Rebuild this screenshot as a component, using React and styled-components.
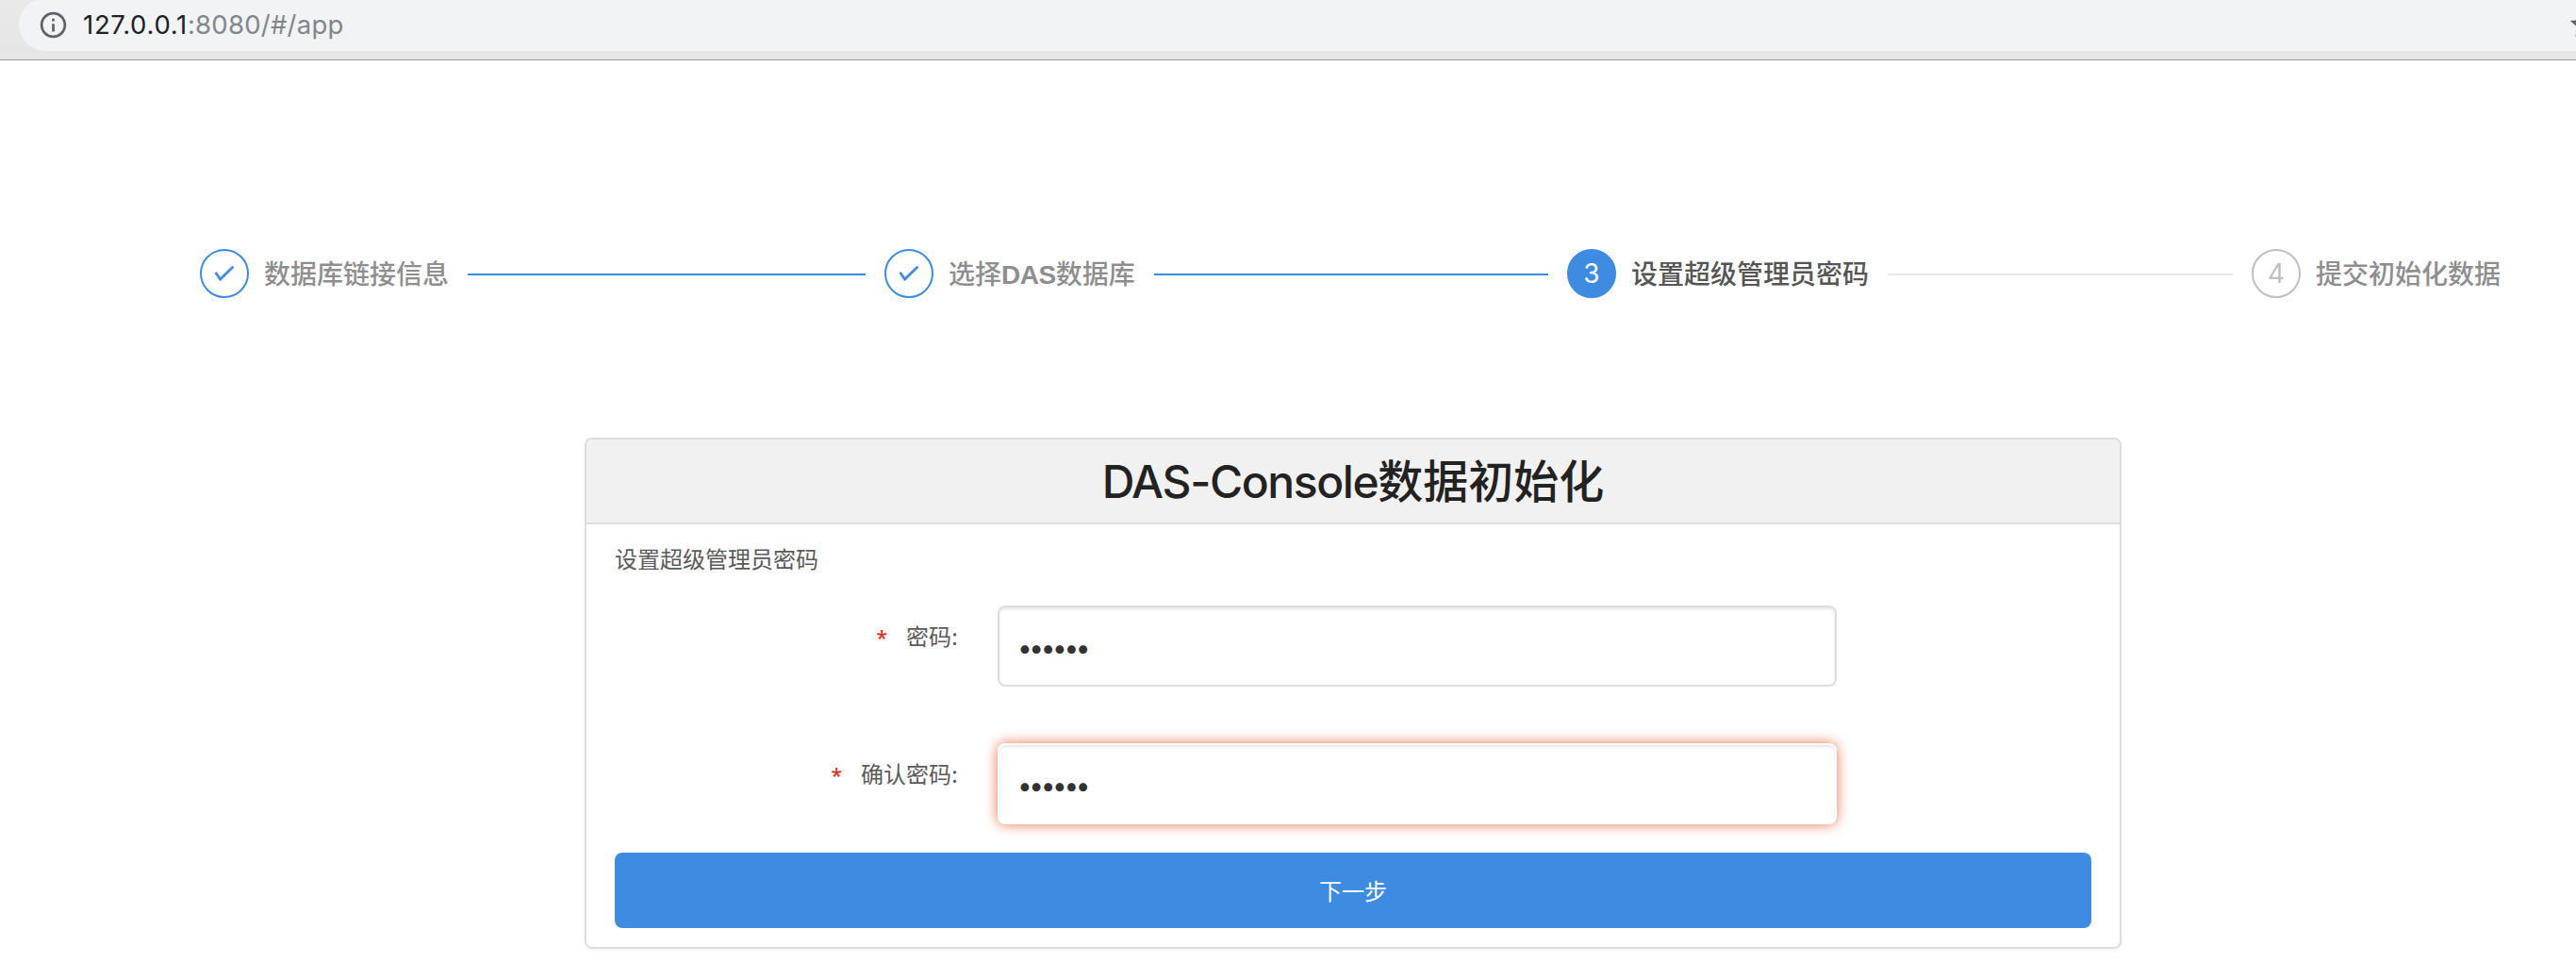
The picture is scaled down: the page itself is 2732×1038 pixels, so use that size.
import React from "react";
import styled, { createGlobalStyle, css } from "styled-components";

const BLUE = "#3d8ce2";

const GlobalStyle = createGlobalStyle`
  * { box-sizing: border-box; }
  html, body { margin: 0; padding: 0; background: #fff; }
  body {
    overflow: hidden;
    font-family: Inter, "Noto Sans CJK SC", sans-serif;
  }
`;

const Page = styled.div`
  display: flex;
  flex-direction: column;
  height: 1038px;
  overflow: hidden;
`;

const BrowserBar = styled.header`
  flex: none;
  height: 64px;
  padding-left: 20px;
  background: linear-gradient(#e9e9e9, #e6e6e6);
  border-bottom: 1px solid #989898;
  overflow: hidden;
`;

const AddressField = styled.div`
  display: flex;
  align-items: center;
  height: 56px;
  margin-top: -2px;
  padding-left: 20px;
  border-radius: 28px 0 0 28px;
  background: #f1f3f5;
`;

const InfoIcon = styled.svg`
  flex: none;
  width: 33px;
  height: 33px;
`;

const Url = styled.span`
  flex: 1;
  margin-left: 15px;
  font-size: 27.5px;
  line-height: 40px;
  letter-spacing: 0.25px;
  color: #80868b;
  white-space: nowrap;
`;

const Host = styled.span`
  color: #202124;
  letter-spacing: 0.7px;
`;

const StarIcon = styled.svg`
  flex: none;
  width: 34px;
  height: 34px;
  margin-right: -25px;
`;

const Steps = styled.ol`
  display: flex;
  flex: none;
  list-style: none;
  margin: 200px 80px 0 212px;
  padding: 0;
`;

const Step = styled.li`
  display: flex;
  align-items: center;
  flex: none;
  width: ${(p) => p.$width}px;
  height: 52px;
`;

const badgeStates = {
  done: css`
    border-color: ${BLUE};
    color: ${BLUE};
  `,
  current: css`
    border-color: ${BLUE};
    background: ${BLUE};
    color: #fff;
  `,
  waiting: css`
    border-color: #bfbfbf;
    color: #bfbfbf;
  `,
};

const Badge = styled.span`
  display: flex;
  align-items: center;
  justify-content: center;
  flex: none;
  width: 52px;
  height: 52px;
  border: 2px solid;
  border-radius: 50%;
  font-size: 28px;
  line-height: 48px;
  ${(p) => badgeStates[p.$state]}
`;

const StepTitle = styled.span`
  flex: none;
  margin-left: 16px;
  padding-top: 3px;
  font-family: "Liberation Sans", "Noto Sans CJK SC", sans-serif;
  font-size: 28px;
  font-weight: 500;
  line-height: 52px;
  white-space: nowrap;
  color: ${(p) => (p.$current ? "#555555" : "#8e8e8e")};

  b {
    font-weight: 700;
    letter-spacing: -0.5px;
  }
`;

const Connector = styled.span`
  flex: 1;
  height: 2px;
  margin: 2px 20px 0;
  background: ${(p) => (p.$done ? BLUE : "#e8e8e8")};
`;

const Card = styled.section`
  display: flex;
  flex-direction: column;
  flex: none;
  width: 1630px;
  height: 542px;
  margin: 148px 0 0 620px;
  border: 2px solid #dddddd;
  border-radius: 8px;
  background: #fff;
  box-shadow: 0 2px 4px rgba(0, 0, 0, 0.05);
`;

const CardHeader = styled.h1`
  flex: none;
  height: 90px;
  margin: 0;
  border-bottom: 2px solid #dddddd;
  border-radius: 6px 6px 0 0;
  background: #f1f1f1;
  color: #222;
  font-size: 48px;
  font-weight: 500;
  line-height: 90px;
  text-align: center;
`;

const ProductName = styled.span`
  letter-spacing: -1.4px;
`;

const CardBody = styled.div`
  display: flex;
  flex-direction: column;
  padding: 0 30px;
  color: #5a5a5a;
  font-size: 24px;
`;

const Hint = styled.p`
  margin: 20px 0 0;
  height: 66px;
  line-height: 36px;
`;

const Field = styled.label`
  display: flex;
  height: 86px;
  margin-bottom: ${(p) => (p.$last ? "30px" : "60px")};
`;

const Caption = styled.span`
  flex: none;
  width: 364px;
  margin-right: 42px;
  padding-top: 16px;
  line-height: 36px;
  text-align: right;
`;

const Required = styled.span`
  margin-right: 20px;
  color: #e02b20;
  font-family: "Noto Sans", sans-serif;
  font-size: 21px;
  font-weight: 500;
`;

const PasswordInput = styled.input`
  width: 890px;
  height: 86px;
  padding: 4px 19px 0;
  border: 2px solid ${(p) => (p.$highlight ? "#fff" : "#dedede")};
  border-radius: 8px;
  outline: none;
  background: #fff;
  background-clip: padding-box;
  color: #333;
  font-family: Inter, sans-serif;
  font-size: 28px;
  letter-spacing: -3.4px;
  box-shadow: inset 0 2px 3px rgba(0, 0, 0, 0.1)
    ${(p) => (p.$highlight ? ", 0 0 14px rgba(224, 80, 30, 0.8)" : "")};
`;

const NextButton = styled.button`
  height: 80px;
  padding: 0 0 1px;
  border: 0;
  border-radius: 8px;
  background: ${BLUE};
  color: #fff;
  font-family: inherit;
  font-size: 24px;
`;

const STEPS = [
  { title: "数据库链接信息", state: "done", width: 726 },
  { title: <>选择<b>DAS</b>数据库</>, state: "done", width: 724 },
  { title: "设置超级管理员密码", state: "current", width: 726 },
  { title: "提交初始化数据", state: "waiting", width: 264 },
];

function CheckMark() {
  return (
    <svg width="24" height="24" viewBox="0 0 24 24" fill="none" stroke="currentColor" strokeWidth="2.8">
      <path d="M3.200 11.800 L7.600 18 L20.600 5.400" strokeLinecap="round" />
    </svg>
  );
}

function AddressBar() {
  return (
    <BrowserBar>
      <AddressField>
        <InfoIcon viewBox="0 0 24 24" fill="#5f6368">
          <path d="M11 7h2v2h-2zm0 4h2v6h-2zm1-9C6.480 2 2 6.480 2 12s4.480 10 10 10 10-4.480 10-10S17.520 2 12 2zm0 18c-4.410 0-8-3.590-8-8s3.590-8 8-8 8 3.590 8 8-3.590 8-8 8z" />
        </InfoIcon>
        <Url>
          <Host>127.0.0.1</Host>:8080/#/app
        </Url>
        <StarIcon viewBox="0 0 24 24" fill="#5f6368">
          <path d="M22 9.240l-7.190-.620L12 2 9.190 8.630 2 9.240l5.460 4.730L5.820 21 12 17.270 18.180 21l-1.630-7.030L22 9.240zM12 15.400l-3.760 2.270 1-4.280-3.320-2.880 4.380-.380L12 6.100l1.710 4.040 4.380.380-3.320 2.880 1 4.280L12 15.400z" />
        </StarIcon>
      </AddressField>
    </BrowserBar>
  );
}

export default function App() {
  return (
    <Page>
      <GlobalStyle />
      <AddressBar />
      <Steps>
        {STEPS.map((step, i) => {
          const last = i === STEPS.length - 1;
          return (
            <Step key={i} $width={step.width}>
              <Badge $state={step.state}>{step.state === "done" ? <CheckMark /> : i + 1}</Badge>
              <StepTitle $current={step.state === "current"}>{step.title}</StepTitle>
              {!last && <Connector $done={step.state === "done"} />}
            </Step>
          );
        })}
      </Steps>
      <Card>
        <CardHeader>
          <ProductName>DAS-Console</ProductName>数据初始化
        </CardHeader>
        <CardBody>
          <Hint>设置超级管理员密码</Hint>
          <Field>
            <Caption>
              <Required>*</Required>密码:
            </Caption>
            <PasswordInput type="password" defaultValue="123456" />
          </Field>
          <Field $last>
            <Caption>
              <Required>*</Required>确认密码:
            </Caption>
            <PasswordInput type="password" defaultValue="123456" $highlight />
          </Field>
          <NextButton type="button">下一步</NextButton>
        </CardBody>
      </Card>
    </Page>
  );
}
